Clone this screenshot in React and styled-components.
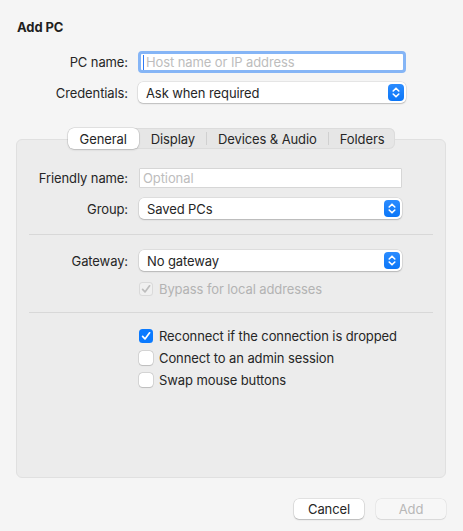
import React from "react";
import styled, { createGlobalStyle } from "styled-components";

const Global = createGlobalStyle`
  html, body { margin: 0; padding: 0; background: #f5f5f5; }
  * { box-sizing: border-box; }
`;

const Window = styled.div`
  width: 463px;
  height: 531px;
  background: #f5f5f5;
  display: flex;
  flex-direction: column;
  font-family: Inter, "Liberation Sans", sans-serif;
  font-size: 13px;
  letter-spacing: -0.1px;
  color: #262626;
  overflow: hidden;
`;

const Title = styled.div`
  padding: 19px 17px 0;
  line-height: 16px;
  font-weight: 700;
  color: #1f1f1f;
`;

const FormGrid = styled.div`
  display: grid;
  grid-template-columns: ${(p) => p.$label}px ${(p) => p.$control}px;
  column-gap: ${(p) => p.$gap}px;
  row-gap: ${(p) => p.$rowGap || 10}px;
  align-items: center;
  padding-left: ${(p) => p.$left}px;
  margin-top: ${(p) => p.$top || 0}px;
`;

const Label = styled.div`
  text-align: right;
  white-space: nowrap;
  line-height: 16px;
`;

const TextField = styled.div`
  height: ${(p) => (p.$focused ? 22 : 20)}px;
  background: #fff;
  border: ${(p) => (p.$focused ? "3px solid #85b5f6" : "1px solid #d6d6d6")};
  border-radius: ${(p) => (p.$focused ? 4 : 1)}px;
  display: flex;
  align-items: center;
  padding-left: ${(p) => (p.$focused ? 2 : 3)}px;
  color: #bdbdbd;
  line-height: 16px;
  white-space: nowrap;
`;

const Caret = styled.span`
  width: 1px;
  height: 15px;
  background: #2f7af6;
  margin-right: 2px;
`;

const Popup = styled.div`
  height: 21px;
  background: #fff;
  border-radius: 5px;
  box-shadow: 0 0 0 0.5px rgba(0, 0, 0, 0.12), 0 1px 1.5px rgba(0, 0, 0, 0.18);
  display: flex;
  align-items: center;
  justify-content: space-between;
  padding: 0 2px 0 8px;
  color: #262626;
  line-height: 16px;
`;

const Stepper = styled.div`
  width: 16px;
  height: 17px;
  border-radius: 4px;
  background: linear-gradient(#2b8cff, #0b76f7);
  display: flex;
  align-items: center;
  justify-content: center;
`;

const TabsZone = styled.div`
  display: flex;
  justify-content: center;
  margin-top: 25px;
  margin-bottom: -10px;
  position: relative;
  z-index: 1;
`;

const TabBar = styled.div`
  display: flex;
  align-items: center;
  height: 21px;
  background: #e6e6e6;
  border-radius: 6px;
  box-shadow: inset 0 0 0 1px #dcdcdc;
`;

const Tab = styled.div`
  position: relative;
  height: 21px;
  display: flex;
  align-items: center;
  padding: 0 ${(p) => p.$pad}px;
  line-height: 16px;
  border-radius: 6px;
  color: #262626;
  background: ${(p) => (p.$active ? "#fff" : "transparent")};
  box-shadow: ${(p) =>
    p.$active ? "0 0 0 0.5px rgba(0,0,0,0.15), 0 1px 2px rgba(0,0,0,0.15)" : "none"};
`;

const TabSep = styled.div`
  width: 1px;
  height: 13px;
  background: ${(p) => (p.$hidden ? "transparent" : "#d0d0d0")};
`;

const Box = styled.div`
  margin: 0 17px 0 16px;
  height: 339px;
  background: #ececec;
  border: 1px solid #e0e0e0;
  border-radius: 6px;
  padding-top: 28px;
  display: flex;
  flex-direction: column;
`;

const Separator = styled.div`
  height: 1px;
  background: #d8d8d8;
  margin: ${(p) => p.$my}px 12px;
`;

const CheckList = styled.div`
  display: flex;
  flex-direction: column;
  gap: 6px;
  padding-left: ${(p) => p.$left}px;
  margin-top: ${(p) => p.$top || 0}px;
`;

const CheckRow = styled.label`
  display: flex;
  align-items: center;
  gap: 6px;
  height: 16px;
  line-height: 16px;
  white-space: nowrap;
  color: ${(p) => (p.$disabled ? "#b3b3b3" : "#262626")};
`;

const Box14 = styled.span`
  width: 14px;
  height: 14px;
  border-radius: 3.5px;
  display: flex;
  align-items: center;
  justify-content: center;
  background: ${(p) => (p.$checked && !p.$disabled ? "#0a7aff" : p.$disabled ? "#f0f0f0" : "#fff")};
  box-shadow: ${(p) =>
    p.$checked && !p.$disabled
      ? "none"
      : p.$disabled
      ? "inset 0 0 0 1px #dadada"
      : "0 0 0 0.5px rgba(0,0,0,0.18), 0 0.5px 1px rgba(0,0,0,0.12)"};
`;

const Footer = styled.div`
  display: flex;
  justify-content: flex-end;
  gap: 12px;
  padding: 21px 17px 0;
`;

const Button = styled.div`
  width: 70px;
  height: 20px;
  border-radius: 5px;
  display: flex;
  align-items: center;
  justify-content: center;
  line-height: 16px;
  background: ${(p) => (p.$disabled ? "#f7f7f7" : "#fff")};
  color: ${(p) => (p.$disabled ? "#b8b8b8" : "#262626")};
  box-shadow: ${(p) =>
    p.$disabled
      ? "0 0 0 0.5px rgba(0,0,0,0.08), 0 0.5px 1px rgba(0,0,0,0.08)"
      : "0 0 0 0.5px rgba(0,0,0,0.15), 0 1px 1.5px rgba(0,0,0,0.18)"};
`;

const Chevrons = () => (
  <svg width="10" height="13" viewBox="0 0 10 13" fill="none">
    <path d="M2.2 5 L5 2.2 L7.8 5" stroke="#fff" strokeWidth="1.6" strokeLinecap="round" strokeLinejoin="round" />
    <path d="M2.2 8 L5 10.8 L7.8 8" stroke="#fff" strokeWidth="1.6" strokeLinecap="round" strokeLinejoin="round" />
  </svg>
);

const Check = ({ color }) => (
  <svg width="10" height="10" viewBox="0 0 10 10" fill="none">
    <path d="M1.6 5.4 L4 7.9 L8.6 1.8" stroke={color} strokeWidth="1.7" strokeLinecap="round" strokeLinejoin="round" />
  </svg>
);

const PopupButton = ({ value }) => (
  <Popup>
    <span>{value}</span>
    <Stepper>
      <Chevrons />
    </Stepper>
  </Popup>
);

const Checkbox = ({ checked, disabled, children }) => (
  <CheckRow $disabled={disabled}>
    <Box14 $checked={checked} $disabled={disabled}>
      {checked && <Check color={disabled ? "#bdbdbd" : "#fff"} />}
    </Box14>
    {children}
  </CheckRow>
);

const tabs = ["General", "Display", "Devices & Audio", "Folders"];

export default function App() {
  return (
    <>
      <Global />
      <Window>
        <Title>Add PC</Title>
        <FormGrid $label={111} $control={268} $gap={10} $left={17} $top={16} $rowGap={9}>
          <Label>PC name:</Label>
          <TextField $focused>
            <Caret />
            Host name or IP address
          </TextField>
          <Label>Credentials:</Label>
          <PopupButton value="Ask when required" />
        </FormGrid>

        <TabsZone>
          <TabBar>
            {tabs.map((t, i) => (
              <React.Fragment key={t}>
                {i > 0 && <TabSep $hidden={i === 1} />}
                <Tab $active={i === 0} $pad={i === 0 ? 12 : 11}>
                  {t}
                </Tab>
              </React.Fragment>
            ))}
          </TabBar>
        </TabsZone>

        <Box>
          <FormGrid $label={111} $control={263} $gap={11} $left={0}>
            <Label>Friendly name:</Label>
            <TextField>Optional</TextField>
            <Label>Group:</Label>
            <PopupButton value="Saved PCs" />
          </FormGrid>
          <Separator $my={15} />
          <FormGrid $label={111} $control={263} $gap={11} $left={0}>
            <Label>Gateway:</Label>
            <PopupButton value="No gateway" />
          </FormGrid>
          <CheckList $left={122} $top={10}>
            <Checkbox checked disabled>
              Bypass for local addresses
            </Checkbox>
          </CheckList>
          <Separator $my={15} />
          <CheckList $left={122}>
            <Checkbox checked>Reconnect if the connection is dropped</Checkbox>
            <Checkbox>Connect to an admin session</Checkbox>
            <Checkbox>Swap mouse buttons</Checkbox>
          </CheckList>
        </Box>

        <Footer>
          <Button>Cancel</Button>
          <Button $disabled>Add</Button>
        </Footer>
      </Window>
    </>
  );
}
